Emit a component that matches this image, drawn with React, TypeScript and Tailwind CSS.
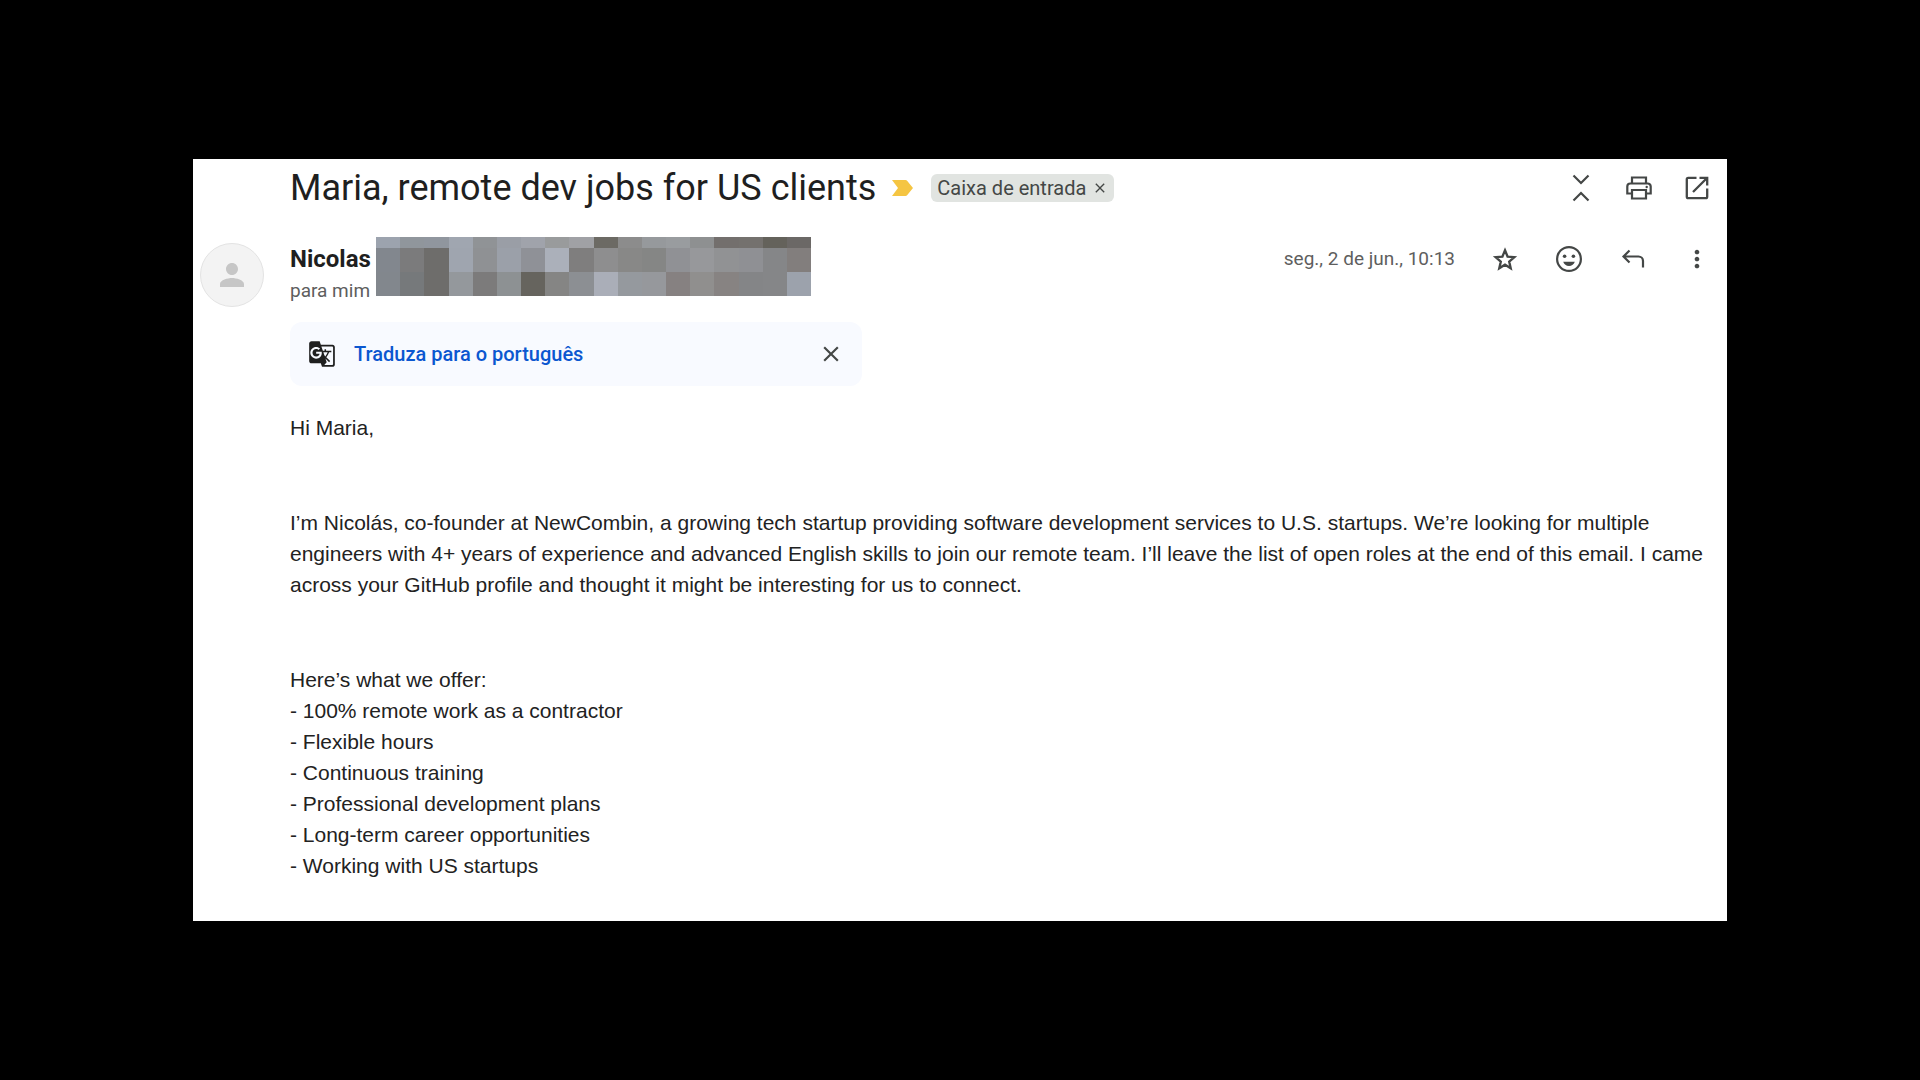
import { MdPerson, MdClose, MdMoreVert, MdGTranslate } from "react-icons/md";

// mosaic over the sender's address
const mosaicRows = [
  {
    height: "h-[11px]",
    colors: ["#9ca3ae", "#90969c", "#90969e", "#a0a6b0", "#909396", "#9a9ea6", "#a0a3ab", "#999b9c", "#a0a1a5", "#6c6a64", "#8c8c8c", "#96999c", "#999c9f", "#8e9091", "#736f6d", "#74716e", "#64625b", "#6b6866"],
  },
  {
    height: "h-6",
    colors: ["#82878e", "#7b7b7c", "#6e6d6b", "#9fa5af", "#8f9194", "#9ba0a9", "#8f9197", "#abb0ba", "#7f7e7e", "#8e8e8f", "#888887", "#858685", "#909195", "#97989b", "#919294", "#8f9094", "#858688", "#827e7d"],
  },
  {
    height: "h-6",
    colors: ["#82878d", "#76797b", "#6e6d6b", "#94989c", "#7c7b7b", "#8d9193", "#66645e", "#858584", "#8c8f93", "#aaaeb8", "#95999e", "#96989c", "#868181", "#908f8e", "#878382", "#848587", "#858688", "#9ca2ac"],
  },
];

const offers = [
  "- 100% remote work as a contractor",
  "- Flexible hours",
  "- Continuous training",
  "- Professional development plans",
  "- Long-term career opportunities",
  "- Working with US startups",
];

function ImportanceMarker() {
  return (
    <svg viewBox="0 0 21 16" className="w-[21px] h-4" fill="#f5c542">
      <path d="M0 0h13.5a2 2 0 0 1 1.6.8L21 8l-5.9 7.2a2 2 0 0 1-1.6.8H0l6-8z" />
    </svg>
  );
}

function CollapseIcon() {
  return (
    <svg viewBox="0 0 28 28" className="size-7" fill="none" stroke="currentColor" strokeWidth="2.2">
      <path d="M6.5 1.5L14 9l7.5-7.5M6.5 26.5L14 19l7.5 7.5" />
    </svg>
  );
}

function PrintIcon() {
  return (
    <svg viewBox="0 0 28 28" className="size-7" fill="none" stroke="currentColor" strokeWidth="2.2">
      <path d="M7 9.500V3.500h14v6" />
      <path d="M7 19.500H2.300V12.500a3 3 0 0 1 3-3h17.400a3 3 0 0 1 3 3v7H21" />
      <path d="M7 16h14v8.500H7z" />
      <circle cx="21.700" cy="13" r="1.200" fill="currentColor" stroke="none" />
    </svg>
  );
}

function NewWindowIcon() {
  return (
    <svg viewBox="0 0 28 28" className="size-7" fill="none" stroke="currentColor" strokeWidth="2.3">
      <path d="M13.5 3.8H5.2a1.4 1.4 0 0 0-1.4 1.4v17.6a1.4 1.4 0 0 0 1.4 1.4h17.6a1.4 1.4 0 0 0 1.4-1.4V14.5" />
      <path d="M16.5 3.8h7.7v7.7M24 4L10 18" />
    </svg>
  );
}

function StarIcon() {
  return (
    <svg viewBox="0 0 24 24" className="size-7 overflow-visible" fill="none" stroke="currentColor" strokeWidth="2">
      <path d="M12 4.500l2.200 5.400 5.800.500-4.400 3.800 1.300 5.700-4.900-3-4.900 3 1.300-5.700-4.400-3.800 5.800-.500z" />
    </svg>
  );
}

function SmileIcon() {
  return (
    <svg viewBox="0 0 28 28" className="size-7" fill="none">
      <circle cx="14" cy="14" r="11.9" stroke="currentColor" strokeWidth="2.2" />
      <circle cx="9.6" cy="11.3" r="1.8" fill="currentColor" />
      <circle cx="18.4" cy="11.3" r="1.8" fill="currentColor" />
      <path d="M8.2 16.8h11.6c-.8 2.500-3 4.300-5.800 4.300s-5-1.800-5.800-4.300z" fill="currentColor" />
    </svg>
  );
}

function ReplyIcon() {
  return (
    <svg viewBox="0 0 28 28" className="size-7" fill="none" stroke="currentColor" strokeWidth="2.2">
      <path d="M10.500 5.500L4.500 11.500l6 6M4.500 11.500h15a4.500 4.500 0 0 1 4.500 4.500v6.500" />
    </svg>
  );
}

export default function App() {
  return (
    <div className="min-h-screen bg-black flex items-center px-[193px] text-[#1f1f1f] font-['Roboto',sans-serif]">
      <main className="w-full bg-white pl-[97px] pr-4 pt-2 pb-10">
        {/* Subject */}
        <div className="flex items-center justify-between">
          <div className="flex items-center">
            <h1 className="text-[36px] leading-[42px]">Maria, remote dev jobs for US clients</h1>
            <span className="ml-4"><ImportanceMarker /></span>
            <div className="ml-[18px] flex items-center gap-1.5 rounded-md bg-[#e1e4e1] px-1.5 h-7 text-[20px] text-[#444746]">
              Caixa de entrada
              <button aria-label="Remover marcador"><MdClose className="size-4" /></button>
            </div>
          </div>
          <div className="flex items-center gap-[30px] text-[#444746]">
            <button aria-label="Recolher tudo"><CollapseIcon /></button>
            <button aria-label="Imprimir"><PrintIcon /></button>
            <button aria-label="Abrir em nova janela"><NewWindowIcon /></button>
          </div>
        </div>

        {/* Sender */}
        <div className="mt-7 flex items-start justify-between">
          <div className="flex items-start">
            <div className="-ml-[90px] mr-[26px] mt-1.5 size-16 rounded-full border border-[#e3e3e3] bg-[#f3f3f3] flex items-center justify-center text-[#c6c6c6]">
              <MdPerson className="size-9" />
            </div>
            <div className="mt-1.5 w-[86px]">
              <p className="text-[24px] leading-8 font-bold">Nicolas</p>
              <p className="text-[19px] leading-8 text-[#5e5e5e]">para mim</p>
            </div>
            <div className="w-[435px]">
              {mosaicRows.map((row, i) => (
                <div key={i} className="flex">
                  {row.colors.map((color, j) => (
                    <div key={j} className={`flex-1 ${row.height}`} style={{ backgroundColor: color }} />
                  ))}
                </div>
              ))}
            </div>
          </div>
          <div className="mt-1.5 flex items-center gap-9 text-[#444746]">
            <time className="text-[19px] leading-8 text-[#5e5e5e]">seg., 2 de jun., 10:13</time>
            <button aria-label="Com estrela"><StarIcon /></button>
            <button aria-label="Adicionar reação"><SmileIcon /></button>
            <button aria-label="Responder"><ReplyIcon /></button>
            <button aria-label="Mais"><MdMoreVert className="size-7" /></button>
          </div>
        </div>

        {/* Translate bar */}
        <div className="mt-[15px] flex h-16 w-[572px] items-center rounded-xl bg-[#f8faff] px-[18px]">
          <MdGTranslate className="size-7" />
          <button className="ml-[18px] text-[20px] font-medium text-[#0b57d0]">Traduza para o português</button>
          <button className="ml-auto text-[#444746]" aria-label="Fechar"><MdClose className="size-[26px]" /></button>
        </div>

        {/* Message body */}
        <div className="mt-[26px] text-[21px] leading-[31px] text-[#222] font-['Liberation_Sans',sans-serif]">
          <p>Hi Maria,</p>
          <p className="mt-16">
            I’m Nicolás, co-founder at NewCombin, a growing tech startup providing software development services to U.S. startups. We’re looking for multiple engineers with 4+ years of experience and advanced English skills to join our remote team. I’ll leave the list of open roles at the end of this email. I came across your GitHub profile and thought it might be interesting for us to connect.
          </p>
          <p className="mt-16">Here’s what we offer:</p>
          {offers.map((offer) => (
            <p key={offer}>{offer}</p>
          ))}
        </div>
      </main>
    </div>
  );
}
